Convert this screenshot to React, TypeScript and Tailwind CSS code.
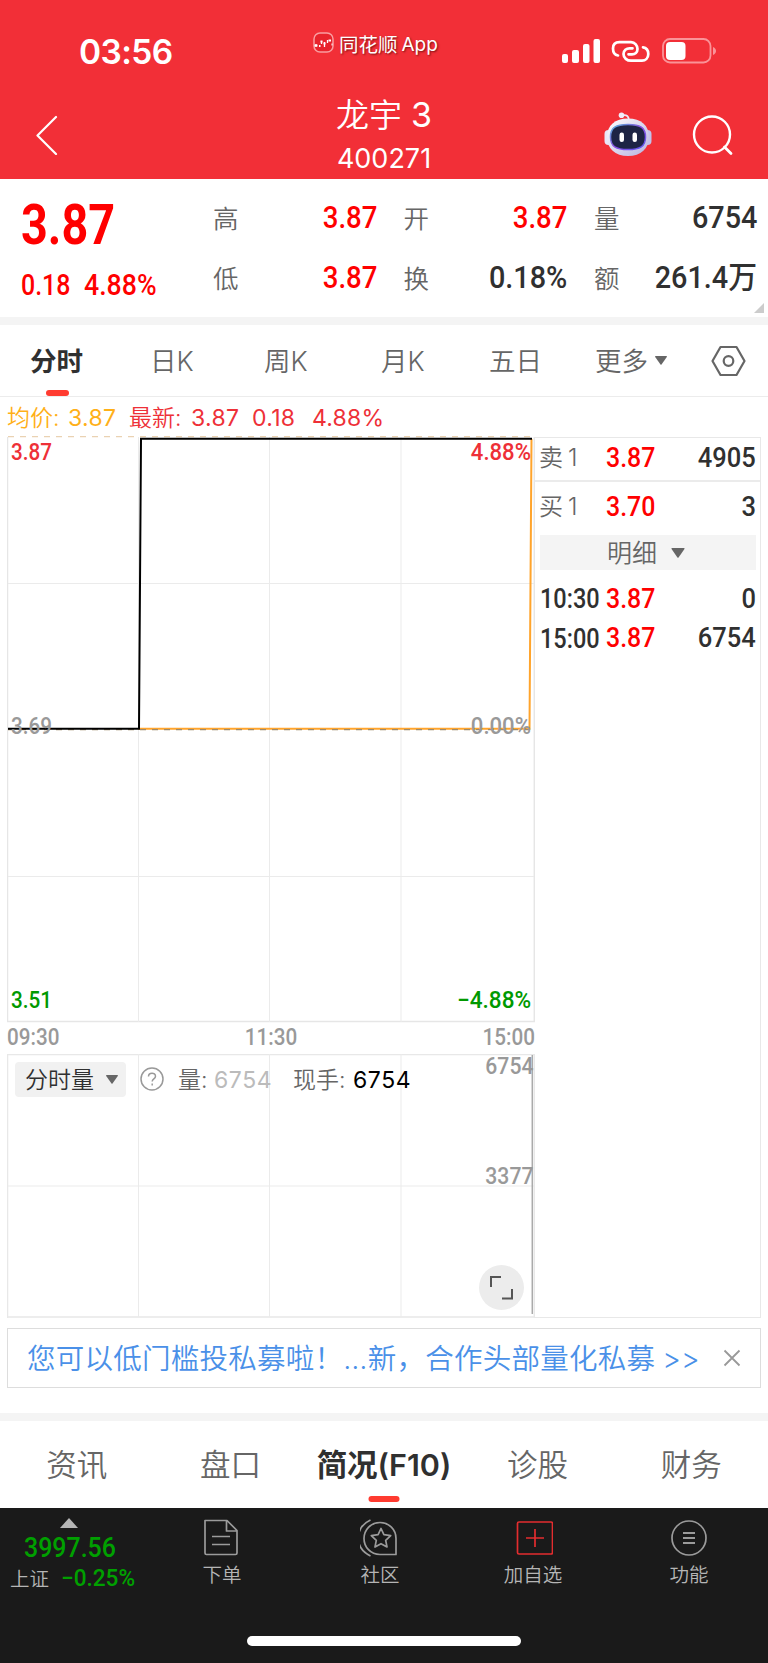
import type { ReactNode } from "react";

const quoteCells = [
    { label: "高", value: "3.87", red: true },
    { label: "开", value: "3.87", red: true },
    { label: "量", value: "6754", red: false },
    { label: "低", value: "3.87", red: true },
    { label: "换", value: "0.18%", red: false },
    { label: "额", value: "261.4万", red: false },
];

const infoTabs = [
    { name: "资讯", active: false },
    { name: "盘口", active: false },
    { name: "简况(F10)", active: true },
    { name: "诊股", active: false },
    { name: "财务", active: false },
];

// Narrow numerals used for every price and volume
function Num({ children, className = "" }: { children: ReactNode; className?: string }) {
    return (
        <span className={`inline-block whitespace-nowrap font-[Roboto,'Noto_Sans_CJK_SC',sans-serif] font-medium ${className}`}>
            {children}
        </span>
    );
}

function Caret({ className = "" }: { className?: string }) {
    return (
        <svg viewBox="0 0 12 9" className={className} fill="currentColor">
            <path d="M.6 0h10.8q.8.2.4.9L6.5 8.5q-.5.5-1 0L.2.9Q-.2.2.6 0z" />
        </svg>
    );
}

function StatusBar() {
    return (
        <div className="flex h-[90px] text-white">
            <div className="w-[313px] pl-[79px] pt-[32px] text-[33.500px] leading-[40px] font-semibold tracking-[-0.6px]">03:56</div>
            <div className="flex w-[249px] gap-[5px] pt-[32px]">
                <svg width="21" height="21" viewBox="0 0 21 21" fill="none">
                    <rect x="1" y="1" width="19" height="19" rx="6" fill="#e8232c" stroke="#f99da0" strokeWidth="1.500" />
                    <path d="M3 12v3M8.500 9v3M11.500 10v5M14.500 8v3" stroke="#fff" strokeWidth="1.300" />
                    <path d="M1.500 13.500h3M6 14h1.500M7.500 9.500h2M10.500 11.500h2M15.500 8.500h2.500M18.500 12.500h1" stroke="#fff" strokeWidth="2" />
                </svg>
                <div className="flex gap-[4px] text-[19.500px] leading-[26px] [text-shadow:1px_1px_2px_rgba(70,0,0,0.7)]">
                    <span>同花顺</span>
                    <span className="text-[19px]">App</span>
                </div>
            </div>
            <svg width="156" height="26" viewBox="0 0 156 26" className="mt-[38px]" fill="none">
                <g fill="#fff">
                    <rect x="0" y="16" width="6" height="9" rx="2" />
                    <rect x="10" y="12" width="7" height="13" rx="2" />
                    <rect x="21" y="6" width="6.500" height="19" rx="2" />
                    <rect x="31.500" y="1" width="6.500" height="24" rx="2" />
                </g>
                <g stroke="#fff" strokeWidth="2.700" strokeLinecap="round">
                    <path d="M56 17.500C53 17 51 14.500 51 10.500C51 6 54 4.200 57.500 4.200H69C73 4.200 75.500 7.500 75.500 11C75.500 14.500 73 16.300 70 16.300H66.500" />
                    <path d="M81 9.300C84.500 9.800 86.300 12.500 86.300 16C86.300 20 83.500 22.700 80 22.700H69C65 22.700 61.500 20 61.500 16C61.500 12.500 64.500 10.300 67.500 10.300H70.500" />
                </g>
                <rect x="101" y="1" width="47.500" height="23.500" rx="7" stroke="#fa9398" strokeWidth="1.800" />
                <rect x="104" y="4" width="19.500" height="18" rx="4" fill="#fff" />
                <path d="M151 9c4 1.500 4 6.500 0 8z" fill="#fa9398" />
            </svg>
        </div>
    );
}

function TitleBar() {
    return (
        <div className="flex h-[89px] text-white">
            <div className="w-[268px] pl-[35px] pt-[25px]">
                <svg width="24" height="40" viewBox="0 0 24 40" fill="none" stroke="currentColor" strokeWidth="2.200" strokeLinecap="round" strokeLinejoin="round">
                    <path d="M21 2 2.500 20.500 21 39" />
                </svg>
            </div>
            <div className="w-[232px] text-center">
                <h1 className="mt-[3px] text-[33px] leading-[44px] font-[350]">
                    龙宇<span className="ml-[9px] text-[34px] font-normal">3</span>
                </h1>
                <div className="mt-[1px] text-[27px] leading-[42px]">400271</div>
            </div>
            <div className="flex grow pl-[104px]">
                <svg width="48" height="46" viewBox="0 0 48 46" className="mt-[21px]" fill="none">
                    <defs>
                        <linearGradient id="shell" x1="0" y1="0" x2="1" y2="1">
                            <stop offset="0" stopColor="#fff" />
                            <stop offset="1" stopColor="#b7b2df" />
                        </linearGradient>
                        <linearGradient id="rim" x1="0" y1="0" x2="1" y2="1">
                            <stop offset="0" stopColor="#55b5d8" />
                            <stop offset=".5" stopColor="#8b4fe0" />
                            <stop offset="1" stopColor="#5b56ee" />
                        </linearGradient>
                    </defs>
                    <path d="M18 4.500q7-1.500 7 5" stroke="#ece9f7" strokeWidth="1.800" />
                    <circle cx="17.500" cy="4.300" r="2.800" fill="#f1edfa" />
                    <rect x="0.500" y="19" width="9" height="15" rx="4" fill="#e9e6f7" />
                    <rect x="38.500" y="19" width="9" height="15" rx="4" fill="#c3c1ea" />
                    <path d="M24 7.500c13 0 21 7 21 18.500S37 45 24 45 3 37.500 3 26 11 7.500 24 7.500z" fill="url(#shell)" />
                    <path d="M24 13.500c12 0 17.500 3 17.500 12.500S36 38.500 24 38.500 6.500 35.500 6.500 26 12 13.500 24 13.500z" fill="#1d2444" stroke="url(#rim)" strokeWidth="1.500" />
                    <rect x="15.500" y="21.500" width="4.500" height="9.500" rx="2.200" fill="#fff" />
                    <rect x="28.500" y="21.500" width="4.500" height="9.500" rx="2.200" fill="#fff" />
                </svg>
                <svg width="42" height="42" viewBox="0 0 42 42" className="mt-[25px] ml-[40px]" fill="none" stroke="currentColor" strokeWidth="2.400">
                    <circle cx="20" cy="19.500" r="18" />
                    <path d="m32.500 32 6.500 6.500" strokeLinecap="round" strokeWidth="2.800" />
                </svg>
            </div>
        </div>
    );
}

function Quote() {
    return (
        <section className="relative flex h-[138px] bg-white">
            <div className="w-[213px] pl-[21px] text-[#f00]">
                <Num className="mt-[16px] origin-left scale-x-[.850] text-[55px] leading-[60px] !font-bold">3.87</Num>
                <div className="mt-[14px] flex h-[32px] text-[29px] leading-[32px]">
                    <Num className="w-[63px] origin-left scale-x-[.860]">0.18</Num>
                    <Num className="origin-left scale-x-[.920]">4.88%</Num>
                </div>
            </div>
            <div className="grid h-[122px] w-[545px] grid-cols-[164px_164px_163px] grid-rows-[60px_60px] gap-x-[26.500px] pt-[9px]">
                {quoteCells.map((cell) => (
                    <div key={cell.label} className="flex items-center justify-between">
                        <span className="mt-[2px] text-[25.500px] font-[350] text-[#666]">{cell.label}</span>
                        <Num className={`origin-right text-[31px] ${cell.red ? "scale-x-[.890] text-[#f00]" : "scale-x-[.930] text-[#303030]"}`}>
                            {cell.value}
                        </Num>
                    </div>
                ))}
            </div>
            <svg className="absolute right-[4px] bottom-[4px] size-[10px]" viewBox="0 0 10 10">
                <path d="M10 0v10H0z" fill="#ccc" />
            </svg>
        </section>
    );
}

function PeriodTabs() {
    return (
        <nav className="flex h-[72px] items-center border-b border-[#ececec] text-[26.500px] font-[350] text-[#666]">
            <div className="relative ml-[30px] flex h-full w-[120px] items-center pt-[2px] font-bold text-[#303030]">
                分时
                <span className="absolute bottom-0 left-[16px] h-[6px] w-[23px] rounded-full bg-[#ff3b30]" />
            </div>
            <div className="w-[114px] pt-[2px]">日K</div>
            <div className="w-[117px] pt-[2px]">周K</div>
            <div className="w-[108px] pt-[2px]">月K</div>
            <div className="w-[106px] pt-[2px]">五日</div>
            <div className="flex w-[116px] items-center gap-[7px] pt-[2px]">
                更多
                <Caret className="-mt-[2px] h-[9px] w-[12px]" />
            </div>
            <svg width="35" height="32" viewBox="0 0 35 32" fill="none" stroke="currentColor" strokeWidth="2.200" strokeLinejoin="round">
                <path d="M9.500 2h16L33.500 16l-8 14h-16L1.500 16z" />
                <circle cx="17.500" cy="16" r="4.800" />
            </svg>
        </nav>
    );
}

function PriceChart() {
    return (
        <div className="relative h-[585px] w-[528px]">
            <svg width="528" height="587" viewBox="7 436 528 587" className="absolute -top-px left-0" fill="none">
                <path d="M7.500 437v585M534.300 437v585M7 1021.500h528" stroke="#e6e6e6" strokeWidth="1.500" />
                <path d="M138.500 437v585M269.500 437v585M401 437v585M8 583.500h526M8 876.500h526" stroke="#ebebeb" />
                <path d="M8 436.700h525" stroke="#ead2b2" strokeWidth="1.200" strokeDasharray="6 6" />
                <path d="M138 728.700H529.500L531.500 439" stroke="#ffa42c" strokeWidth="2" />
                <path d="M8 729.700h525" stroke="#a08a68" strokeWidth="1.200" strokeDasharray="6 6" />
                <path d="M8 728.700H139L141 438.700H532" stroke="#000" strokeWidth="2" />
            </svg>
            <div className="relative flex h-full flex-col justify-between px-[4px] text-[23.500px] leading-[24px]">
                <div className="flex justify-between pt-[3px] text-[#ee3037]">
                    <Num className="origin-left scale-x-[.880]">3.87</Num>
                    <Num className="origin-right scale-x-[.940]">4.88%</Num>
                </div>
                <div className="flex justify-between text-[#999]">
                    <Num className="origin-left scale-x-[.880]">3.69</Num>
                    <Num className="origin-right scale-x-[.940]">0.00%</Num>
                </div>
                <div className="flex justify-between pb-[10px] text-[#009900]">
                    <Num className="origin-left scale-x-[.880]">3.51</Num>
                    <Num className="origin-right scale-x-[.960]">−4.88%</Num>
                </div>
            </div>
        </div>
    );
}

function VolumeChart() {
    return (
        <div className="relative h-[264px] w-[528px]">
            <svg width="528" height="264" viewBox="7 1054 528 264" className="absolute top-0 left-0" fill="none">
                <path d="M7 1054.500h528M7.500 1054v264M534.300 1054v264M7 1317h528" stroke="#e8e8e8" strokeWidth="1.500" />
                <path d="M138.500 1054v263M269.500 1054v263M401 1054v263M8 1186h526" stroke="#ebebeb" />
                <path d="M532.300 1055v259" stroke="#aaa" strokeWidth="1.500" />
            </svg>
            <div className="relative flex pt-[8px] pl-[8px]">
                <div className="flex h-[35px] w-[111px] items-center gap-[12px] rounded-[4px] bg-[#f1f1f1] pl-[10px] text-[23px] font-[350] text-[#303030]">
                    <span className="pt-[2px]">分时量</span>
                    <Caret className="h-[9px] w-[12px] text-[#666]" />
                </div>
                <svg width="24" height="24" viewBox="0 0 24 24" className="mt-[5px] ml-[14px]" fill="none" stroke="#999" strokeWidth="1.500">
                    <circle cx="12" cy="12" r="11" />
                    <path d="M8.500 9.500c0-4.500 7-4.300 7-.3 0 2.600-3.300 2.600-3.300 5.200M12.200 16.600v2" />
                </svg>
                <div className="ml-[14px] flex text-[23px] leading-[36px] font-[350] text-[#666]">
                    <span className="w-[36px]">量:</span>
                    <span className="w-[79px] font-normal tracking-[0.6px] text-[#bbb]">6754</span>
                    <span className="w-[60px]">现手:</span>
                    <span className="font-normal tracking-[0.6px] text-black">6754</span>
                </div>
            </div>
            <Num className="absolute top-[0px] right-[2px] origin-right scale-x-[.900] text-[23.500px] leading-[24px] text-[#999]">6754</Num>
            <Num className="absolute top-[110px] right-[2px] origin-right scale-x-[.900] text-[23.500px] leading-[24px] text-[#999]">3377</Num>
            <div className="absolute right-[11px] bottom-[8px] size-[45px] rounded-full bg-[#ececec]">
                <svg viewBox="0 0 45 45" fill="none" stroke="#555" strokeWidth="2">
                    <path d="M12 22V12h10M33 24v9.500H23" />
                </svg>
            </div>
        </div>
    );
}

function OrderRow({ label, price, amount }: { label: ReactNode; price: string; amount: string }) {
    return (
        <div className="flex items-center text-[28px] leading-[32px]">
            <div className="w-[66px]">{label}</div>
            <Num className="origin-left scale-x-[.890] text-[#f00]">{price}</Num>
            <Num className="ml-auto origin-right scale-x-[.910] text-[#303030]">{amount}</Num>
        </div>
    );
}

function SideLabel({ children }: { children: ReactNode }) {
    return <span className="-ml-px flex gap-[5px] pt-[1px] text-[24px] font-[350] text-[#666]">{children}</span>;
}

function OrderBook() {
    return (
        <aside className="h-[881px] w-[226px] border border-l-0 border-[#e8e8e8] pr-[4px] pl-[5px]">
            <div className="-mr-[4px] -ml-[5px] h-[44px] border-b-2 border-[#ebebeb] pr-[4px] pl-[5px]">
                <div className="grid h-[39px]">
                    <OrderRow label={<SideLabel><span>卖</span><span>1</span></SideLabel>} price="3.87" amount="4905" />
                </div>
            </div>
            <div className="mt-[3px] grid h-[43px]">
                <OrderRow label={<SideLabel><span>买</span><span>1</span></SideLabel>} price="3.70" amount="3" />
            </div>
            <div className="mt-[7px] mb-[9px] flex h-[35px] items-center justify-center gap-[14px] bg-[#f4f4f4] pr-[4px] text-[25px] font-[350] text-[#666]">
                <span className="pt-[2px]">明细</span>
                <Caret className="h-[10px] w-[14px]" />
            </div>
            <div className="grid h-[79px] grid-rows-2">
                <OrderRow label={<Num className="origin-left scale-x-[.840] text-[#303030]">10:30</Num>} price="3.87" amount="0" />
                <OrderRow label={<Num className="origin-left scale-x-[.840] text-[#303030]">15:00</Num>} price="3.87" amount="6754" />
            </div>
        </aside>
    );
}

function BottomItem({ label, className, children }: { label: string; className: string; children: ReactNode }) {
    return (
        <div className={`flex flex-col items-center pt-[10px] text-[19.500px] leading-[26px] font-[350] text-[#b5b5b5] ${className}`}>
            <svg width="40" height="40" viewBox="0 0 40 40" className="mb-[4px]" fill="none" stroke="#9b9b9b" strokeWidth="1.700" strokeLinejoin="round">
                {children}
            </svg>
            {label}
        </div>
    );
}

function BottomBar() {
    return (
        <footer className="relative flex h-[155px] bg-[#1a1a1a]">
            <div className="w-[140px]">
                <svg width="18" height="10" viewBox="0 0 18 10" className="mt-[10px] ml-[60px]">
                    <path d="M9 0l9 10H0z" fill="#b5b5b5" />
                </svg>
                <Num className="mt-[4px] ml-[24px] block w-[110px] origin-left scale-x-[.890] text-[28px] leading-[32px] text-[#00a000]">3997.56</Num>
                <div className="-mt-px flex items-center pl-[10px] text-[19.500px] leading-[28px] font-[350] text-[#b5b5b5]">
                    <span className="w-[54px] pt-[2px]">上证</span>
                    <Num className="origin-left scale-x-[.940] text-[24px] text-[#00a000]">−0.25%</Num>
                </div>
            </div>
            <BottomItem label="下单" className="ml-[32px] w-[100px]">
                <path d="M3 2.500h22L35 12.500V35q0 1.500-1.500 1.500h-29Q3 36.500 3 35V2.500zM24.500 3v10H35M10 18.500h18M10 26.500h18" />
            </BottomItem>
            <BottomItem label="社区" className="ml-[58px] w-[100px]">
                <path d="M21 4.500C11.500 4.500 5 12 5 20.500S11.500 36.500 21 36.500H37V20.500C37 11.500 30 4.500 21 4.500zM11.500 2C3 6-.700 12-.700 20s3.700 14 12.200 18" className="-translate-x-px" />
                <path d="m21 10.500 2.900 6.200 6.800.9-5 4.700 1.300 6.700-6-3.300-6 3.300 1.300-6.700-5-4.700 6.800-.9z" />
            </BottomItem>
            <BottomItem label="加自选" className="ml-[53px] w-[100px]">
                <g stroke="#e32d2f">
                    <rect x="4.500" y="4" width="35" height="32" rx="1.500" />
                    <path d="M22 11v18M13 20h18" />
                </g>
            </BottomItem>
            <BottomItem label="功能" className="ml-[56px] w-[100px]">
                <circle cx="20" cy="20" r="17" />
                <path d="M14 15h12M14 20h12M14 25h12" strokeWidth="2" />
            </BottomItem>
            <div className="absolute bottom-[17px] left-[247px] h-[10px] w-[274px] rounded-full bg-white" />
        </footer>
    );
}

export default function App() {
    return (
        <main className="h-[1663px] w-[768px] overflow-hidden bg-white font-[Inter,'Noto_Sans_CJK_SC',sans-serif]">
            <header className="bg-[#f22f37]">
                <StatusBar />
                <TitleBar />
            </header>
            <Quote />
            <div className="h-[8px] bg-[#f4f4f4]" />
            <PeriodTabs />
            <div className="flex h-[40px] items-center pt-[2px] pl-[7px] text-[23px] whitespace-nowrap text-[#ee3037]">
                <span className="w-[61px] font-[350] text-[#ffb018]">均价:</span>
                <span className="w-[61px] tracking-[0.3px] text-[#ffb018]">3.87</span>
                <span className="w-[62px] font-[350]">最新:</span>
                <span className="w-[61px] tracking-[0.3px]">3.87</span>
                <span className="w-[60px] tracking-[0.3px]">0.18</span>
                <span className="tracking-[0.2px]">4.88%</span>
            </div>
            <div className="flex pl-[7px]">
                <div className="w-[528px]">
                    <PriceChart />
                    <div className="grid h-[32px] grid-cols-3 items-center pb-[2px] text-[23.500px] leading-[30px] text-[#999]">
                        <Num className="origin-left scale-x-[.880]">09:30</Num>
                        <Num className="scale-x-[.880] text-center">11:30</Num>
                        <Num className="origin-right scale-x-[.880] text-right">15:00</Num>
                    </div>
                    <VolumeChart />
                </div>
                <OrderBook />
            </div>
            <div className="mx-[7px] mt-[10px] flex h-[60px] items-center border border-[#ddd] pt-[2px] pl-[19px] text-[28.500px] font-[350] tracking-[0.250px] whitespace-nowrap text-[#4a90e8]">
                <span>您可以低门槛投私募啦！</span>
                <span>…新，合作头部量化私募</span>
                <span className="ml-[7px]">&gt;&gt;</span>
                <svg width="18" height="18" viewBox="0 0 18 18" className="-mt-[2px] mr-[19px] ml-auto" stroke="#999" strokeWidth="1.800">
                    <path d="m1.500 1.500 15 15M16.500 1.500l-15 15" />
                </svg>
            </div>
            <div className="mt-[25px] h-[8px] bg-[#f4f4f4]" />
            <nav className="grid h-[87px] grid-cols-5 text-center text-[30.500px] leading-[87px] font-[350] whitespace-nowrap text-[#666]">
                {infoTabs.map((tab) => (
                    <div key={tab.name} className={tab.active ? "relative font-semibold text-[#303030]" : ""}>
                        {tab.name}
                        {tab.active && (
                            <span className="absolute bottom-[6px] left-1/2 h-[6px] w-[31px] -translate-x-1/2 rounded-full bg-[#ff3b30]" />
                        )}
                    </div>
                ))}
            </nav>
            <BottomBar />
        </main>
    );
}
